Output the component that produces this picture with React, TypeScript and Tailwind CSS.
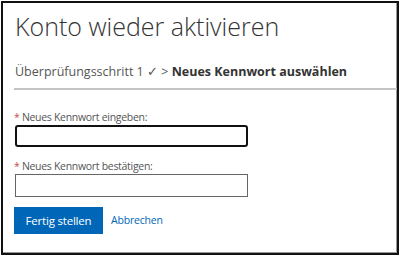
export default function App() {
  return (
    <div className="w-[400px] h-[257px] bg-white" style={{ fontFamily: '"Open Sans", "Noto Sans", sans-serif' }}>
      <div className="ml-[1px] mt-[1px] w-[398px] h-[254px] border-2 border-[#111] shadow-[inset_-1px_-1px_0_#999] flex flex-col overflow-hidden">
        <div className="pl-[12px] pt-[8px] text-[25px] font-light leading-[30px] text-[#333] whitespace-nowrap">
          Konto wieder aktivieren
        </div>
        <div className="pl-[12px] mt-[23px] text-[12.5px] leading-[16px] text-[#555] whitespace-nowrap">
          Überprüfungsschritt 1 ✓ &gt; <span className="font-bold text-[#333]">Neues Kennwort auswählen</span>
        </div>
        <div className="ml-[11px] mt-[8px] h-[2px] bg-[#c4c4c4]" />
        <div className="pl-[11px] mt-[20px] text-[10.5px] leading-[14px] tracking-[-0.3px] text-[#555] whitespace-nowrap">
          <span className="text-[#c0504d]">*</span> Neues Kennwort eingeben:
        </div>
        <div className="ml-[12px] mt-[1px] w-[233px] h-[22px] border-2 border-[#111] rounded-[3px]" />
        <div className="pl-[11px] mt-[12px] text-[10.5px] leading-[14px] tracking-[-0.3px] text-[#555] whitespace-nowrap">
          <span className="text-[#c0504d]">*</span> Neues Kennwort bestätigen:
        </div>
        <div className="ml-[12px] mt-[1px] w-[233px] h-[23px] border border-[#666]" />
        <div className="pl-[11px] mt-[10px] flex items-center">
          <div className="w-[89px] h-[27px] bg-[#0067b8] text-white text-[11.5px] tracking-[-0.2px] flex items-center justify-center">
            Fertig stellen
          </div>
          <div className="ml-[8px] text-[10.5px] tracking-[-0.2px] text-[#0067b8]">Abbrechen</div>
        </div>
      </div>
    </div>
  );
}
